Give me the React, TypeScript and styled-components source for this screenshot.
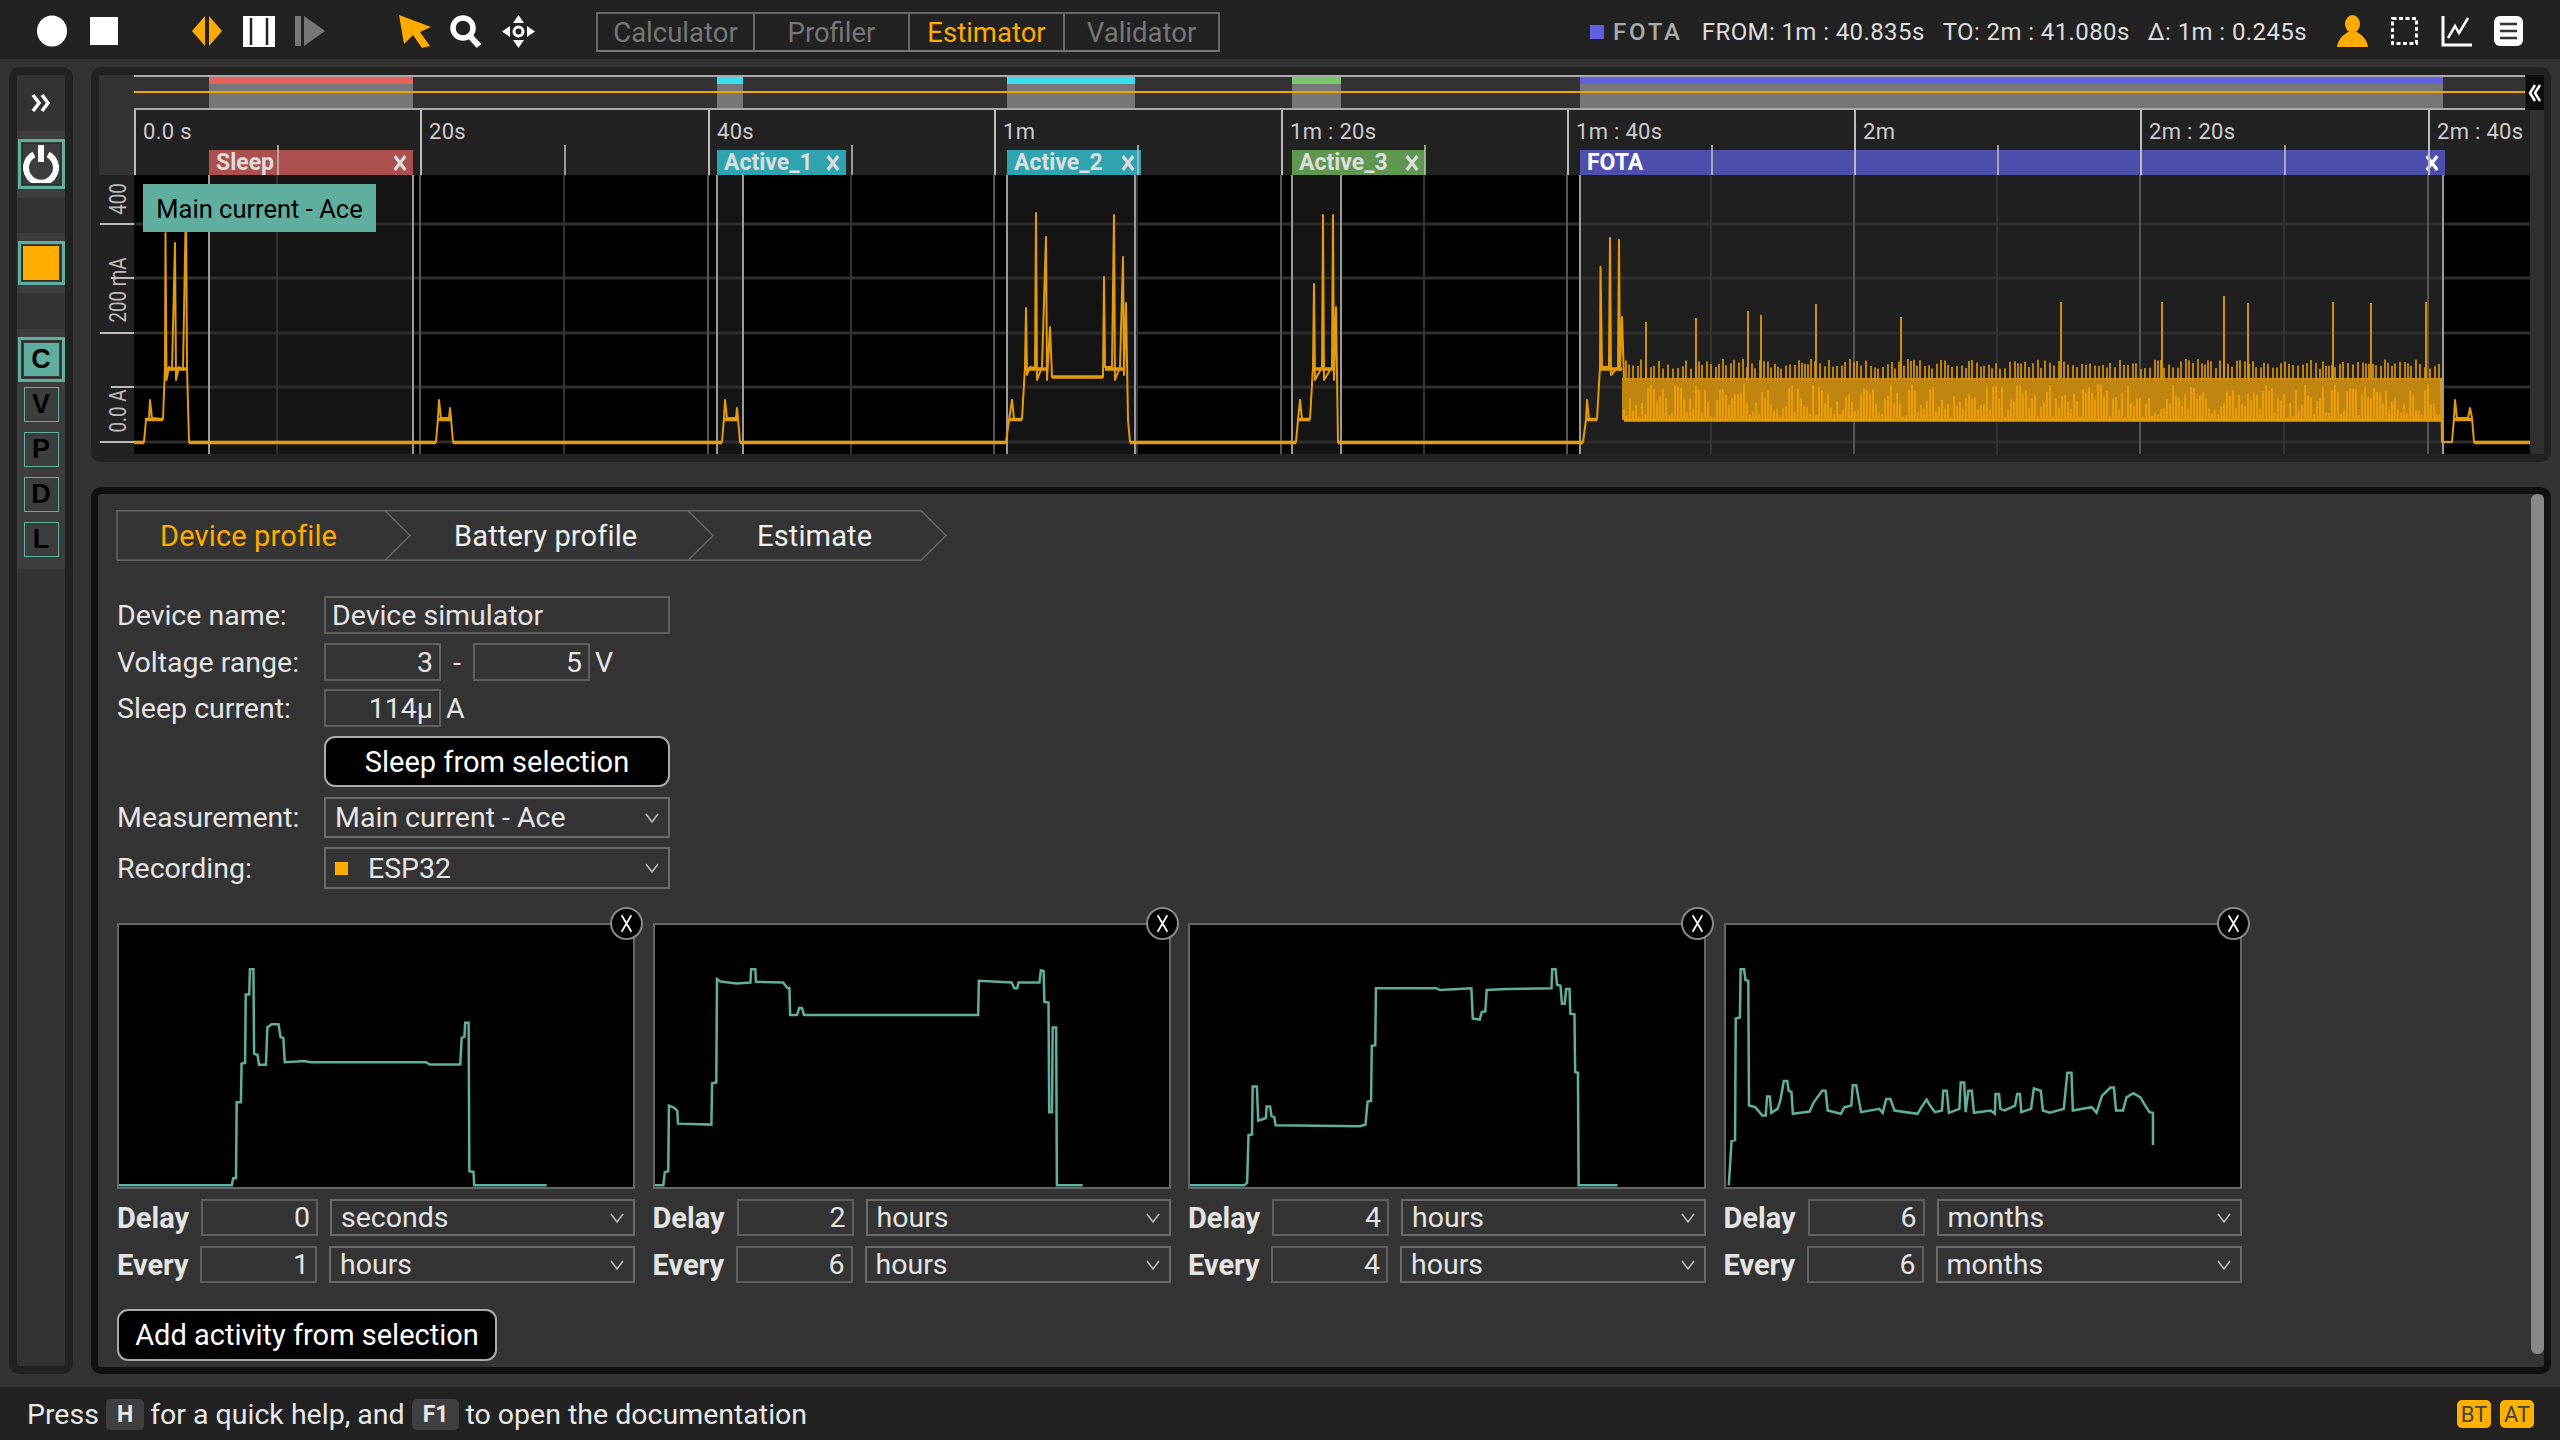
import styled, { createGlobalStyle } from 'styled-components';

const GlobalStyle = createGlobalStyle`
  html, body {
    margin: 0;
    padding: 0;
    background: #333;
    font-family: Roboto, "Liberation Sans", sans-serif;
  }
  * { box-sizing: border-box; }
`

const ORANGE = '#ffab00'
const TEAL = '#5fae9e'
const WAVE = '#e39b0c'

const Page = styled.div`
  width: 2560px;
  height: 1440px;
  display: flex;
  flex-direction: column;
  background: #333;
  overflow: hidden;
`

/* top bar */
const TopBar = styled.div`
  height: 59px;
  flex: none;
  background: #222;
  display: flex;
  align-items: center;
  position: relative;
  padding: 3px 0 0 37px;
`

const IconBox = styled.svg<{ $ml: number }>`
  display: block;
  flex: none;
  margin-left: ${p => p.$ml}px;
`

const Tabs = styled.div`
  display: flex;
  height: 40px;
  margin: 2px 0 0 61px;
  border: 2px solid #666;
  border-bottom-color: #777;
`

const Tab = styled.div<{ $active?: boolean }>`
  width: 155px;
  display: flex;
  align-items: center;
  justify-content: center;
  font-size: 27.5px;
  color: ${p => (p.$active ? ORANGE : '#777')};
  & + & { border-left: 2px solid #666; }
`

const Metrics = styled.div`
  display: flex;
  align-items: center;
  margin: 1px 0 0 auto;
  color: #ddd;
  font-size: 24px;
  letter-spacing: 0.4px;
  white-space: pre;
`

const Swatch = styled.span<{ $color: string; $size: number }>`
  display: inline-block;
  width: ${p => p.$size}px;
  height: ${p => p.$size}px;
  background: ${p => p.$color};
  flex: none;
`

const MetricName = styled.span`
  color: #aaa;
  font-weight: 500;
  letter-spacing: 2.8px;
  margin: 0 19px 0 9px;
`

const Metric = styled.span`
  margin-right: 18px;
`

const TopIcons = styled.div`
  display: flex;
  align-items: center;
  padding-right: 37px;
`

/* main area */
const Main = styled.div`
  flex: 1;
  display: flex;
  padding: 8px 9px 13px;
  gap: 18px;
  min-height: 0;
`

const Rail = styled.div`
  width: 64px;
  flex: none;
  border: 8px solid #222;
  border-radius: 10px;
  background: #333;
  display: flex;
  flex-direction: column;
`

const RailToggle = styled.div`
  height: 56px;
  flex: none;
  display: flex;
  align-items: center;
  justify-content: center;
`

const RailGroup = styled.div<{ $h: number; $mt: number }>`
  height: ${p => p.$h}px;
  margin-top: ${p => p.$mt}px;
  flex: none;
  background: #3d3d3d;
  display: flex;
  flex-direction: column;
  align-items: center;
  padding-top: 8px;
`

const RailButton = styled.div<{ $h: number }>`
  width: 47px;
  height: ${p => p.$h}px;
  flex: none;
  border: 3px solid ${TEAL};
  display: flex;
  align-items: center;
  justify-content: center;
  outline: 1px solid #2c2c2c;
  outline-offset: -5px;
`

const OrangeFill = styled.div`
  width: 36px;
  height: 34px;
  background: ${ORANGE};
`

const ActiveLetter = styled.div`
  width: 35px;
  height: 33px;
  background: ${TEAL};
  color: #000;
  font: 700 27px "Liberation Sans", sans-serif;
  display: flex;
  align-items: center;
  justify-content: center;
`

const LetterList = styled.div`
  margin-top: 5px;
  display: flex;
  flex-direction: column;
  gap: 10px;
`

const LetterButton = styled.div`
  width: 35px;
  height: 35px;
  border: 1.5px solid ${TEAL};
  color: #000;
  font: 700 27px "Liberation Sans", sans-serif;
  display: flex;
  align-items: center;
  justify-content: center;
`

const RightColumn = styled.div`
  flex: 1;
  min-width: 0;
  display: flex;
  flex-direction: column;
  gap: 25px;
`

/* chart */
const ChartCard = styled.div`
  height: 395px;
  flex: none;
  background: #222;
  border-radius: 10px;
  padding: 8px 7px 8px 8px;
  display: grid;
  grid-template-columns: 35px 2396px 1fr;
  grid-template-rows: 100px 279px;
  position: relative;
`

const AxisHead = styled.div`
  background: #333;
`

const ChartHead = styled.div`
  display: flex;
  flex-direction: column;
`

const RightGutter = styled.div`
  grid-column: 3;
  grid-row: 1 / span 2;
  background: #2f2f2f;
`

const Overview = styled.div`
  width: 2391px;
  height: 35px;
  flex: none;
  background: #333;
  border-top: 2px solid #aaa;
  border-bottom: 2px solid #aaa;
  position: relative;
`

const OverviewRegion = styled.div<{ $x: number; $w: number }>`
  position: absolute;
  left: ${p => p.$x}px;
  width: ${p => p.$w}px;
  top: 0;
  bottom: 0;
  background: #777;
`

const OverviewStripe = styled.div<{ $color: string }>`
  height: 7px;
  background: ${p => p.$color};
`

const OverviewLine = styled.div`
  position: absolute;
  left: 0;
  right: 0;
  top: 14px;
  height: 2px;
  background: #f0a400;
`

const CollapseButton = styled.div`
  position: absolute;
  top: 8px;
  right: 7px;
  width: 18px;
  height: 35px;
  background: #0c0c0c;
  display: flex;
  align-items: center;
  justify-content: center;
`

const Timeline = styled.div`
  flex: 1;
  position: relative;
  overflow: hidden;
`

const MajorTick = styled.div<{ $x: number }>`
  position: absolute;
  left: ${p => p.$x}px;
  top: 0;
  bottom: 0;
  width: 2px;
  background: #bbb;
  z-index: 2;
`

const MinorTick = styled.div<{ $x: number }>`
  position: absolute;
  left: ${p => p.$x}px;
  top: 35px;
  bottom: 0;
  width: 2px;
  background: #bbb;
  opacity: 0.8;
  z-index: 2;
`

const TimeLabel = styled.div<{ $x: number }>`
  position: absolute;
  left: ${p => p.$x + 9}px;
  top: 10px;
  font-size: 22px;
  line-height: 24px;
  letter-spacing: 0.3px;
  color: #ccc;
  white-space: pre;
`

const ActivityTag = styled.div<{ $x: number; $w: number; $color: string; $bright?: boolean }>`
  position: absolute;
  left: ${p => p.$x}px;
  width: ${p => p.$w}px;
  top: 40px;
  height: 25px;
  background: ${p => p.$color};
  color: ${p => (p.$bright ? '#fff' : '#ddd')};
  font-size: 23px;
  font-weight: 700;
  line-height: 25px;
  padding: 0 6px 0 7px;
  display: flex;
  justify-content: space-between;
  align-items: center;
`

const YAxis = styled.div`
  position: relative;
  background: #222;
`

const YTick = styled.div<{ $y: number; $x: number }>`
  position: absolute;
  top: ${p => p.$y - 1}px;
  left: ${p => p.$x}px;
  right: 0;
  height: 2px;
  background: #bbb;
`

const YLabel = styled.div<{ $y: number }>`
  position: absolute;
  left: 19px;
  top: ${p => p.$y}px;
  width: 0;
  height: 0;
  display: flex;
  align-items: center;
  justify-content: center;
  color: #bbb;
  font-size: 24px;
  white-space: pre;
  transform: rotate(-90deg) scaleX(0.78);
`

const Plot = styled.div`
  position: relative;
  background: #000;
`

const PlotSvg = styled.svg`
  display: block;
`

const SignalTag = styled.div`
  position: absolute;
  left: 9px;
  top: 9px;
  width: 233px;
  height: 48px;
  background: ${TEAL};
  color: #000;
  font-size: 25.5px;
  padding-top: 1px;
  display: flex;
  align-items: center;
  justify-content: center;
`

/* lower panel */
const Panel = styled.div`
  flex: 1;
  min-height: 0;
  background: #343434;
  border: 7px solid #111;
  border-radius: 10px;
  padding: 16px 0 0 19px;
  position: relative;
  color: #e4e4e4;
  font-size: 28.5px;
`

const ScrollThumb = styled.div`
  position: absolute;
  right: 0;
  top: 0;
  bottom: 13px;
  width: 13px;
  background: #888;
  border-radius: 6px;
`

const Steps = styled.div`
  display: flex;
  height: 51px;
`

const Step = styled.div<{ $w: number; $pad: number; $active?: boolean }>`
  width: ${p => p.$w}px;
  height: 51px;
  position: relative;
  padding-left: ${p => p.$pad}px;
  line-height: 52px;
  font-size: 29px;
  letter-spacing: 0.15px;
  color: ${p => (p.$active ? ORANGE : '#f0f0f0')};
`

const StepOutline = styled.svg`
  position: absolute;
  left: 0;
  top: 0;
  overflow: visible;
`

const Form = styled.div`
  margin-top: 35px;
  display: flex;
  flex-direction: column;
`

const FormRow = styled.div<{ $h: number; $mt: number }>`
  height: ${p => p.$h}px;
  margin-top: ${p => p.$mt}px;
  display: flex;
  align-items: center;
`

const Label = styled.div`
  width: 207px;
  flex: none;
`

const Input = styled.input<{ $w: number; $right?: boolean }>`
  width: ${p => p.$w}px;
  height: 100%;
  background: transparent;
  border: 2px solid #5f5f5f;
  color: #e4e4e4;
  font: 28.5px Roboto, sans-serif;
  padding: 0 6px;
  text-align: ${p => (p.$right ? 'right' : 'left')};
  outline: none;
`

const Unit = styled.span`
  margin-left: 5px;
`

const Dash = styled.span`
  width: 32px;
  text-align: center;
`

const BlackButton = styled.div<{ $w: number; $h: number }>`
  width: ${p => p.$w}px;
  height: ${p => p.$h}px;
  background: #000;
  border: 2px solid #aaa;
  border-radius: 11px;
  color: #fff;
  font-size: 29px;
  display: flex;
  align-items: center;
  justify-content: center;
`

const Select = styled.div<{ $w?: number; $ml?: number }>`
  ${p => (p.$w ? `width: ${p.$w}px;` : 'flex: 1;')}
  margin-left: ${p => p.$ml ?? 0}px;
  height: 100%;
  border: 2px solid #6a6a6a;
  display: flex;
  align-items: center;
  padding: 0 8px 0 9px;
  color: #e4e4e4;
  font-size: 28.5px;
`

const SelectText = styled.span`
  flex: 1;
  display: flex;
  align-items: center;
`

const RecordingDot = styled.span`
  width: 13px;
  height: 13px;
  background: ${ORANGE};
  margin: 0 20px 0 0;
`

const Cards = styled.div`
  margin-top: 34px;
  display: flex;
  gap: 17.5px;
`

const Card = styled.div`
  width: 518px;
  flex: none;
`

const Spark = styled.div`
  height: 266px;
  background: #000;
  border: 2px solid #666;
  position: relative;
`

const SparkSvg = styled.svg`
  display: block;
  width: 100%;
  height: 100%;
`

const CloseCircle = styled.div`
  position: absolute;
  top: -18px;
  right: -10px;
  width: 33px;
  height: 33px;
  border-radius: 50%;
  background: #000;
  border: 2px solid #888;
  color: #fff;
  display: flex;
  align-items: center;
  justify-content: center;
`

const CardRow = styled.div`
  height: 37px;
  margin-top: 10px;
  display: flex;
  align-items: center;
`

const CardLabel = styled.div<{ $w: number }>`
  width: ${p => p.$w}px;
  flex: none;
  font-weight: 700;
  font-size: 29px;
`

const AddRow = styled.div`
  margin-top: 26px;
`

/* status bar */
const StatusBar = styled.div`
  height: 53px;
  flex: none;
  background: #222;
  color: #e8e8e8;
  font-size: 28.5px;
  display: flex;
  align-items: center;
  padding: 1px 26px 0 27px;
  white-space: pre;
`

const Key = styled.span`
  display: inline-flex;
  align-items: center;
  justify-content: center;
  height: 31px;
  padding: 0 11px;
  margin: 0 6px 0 7px;
  background: #3f3f3f;
  border-radius: 5px;
  font-size: 23px;
  font-weight: 700;
`

const Badges = styled.div`
  margin-left: auto;
  display: flex;
  gap: 9px;
`

const Badge = styled.div`
  width: 34px;
  height: 28px;
  background: #ffb000;
  border-radius: 5px;
  color: #444;
  font-size: 22px;
  display: flex;
  align-items: center;
  justify-content: center;
`

/* data */
const CHART_X = 134
const MAJORS = [134, 420, 708, 994, 1281, 1567, 1854, 2140, 2428]
const MINORS = [277, 564, 851, 1137, 1424, 1711, 1997, 2284]
const TIME_LABELS = ['0.0 s', '20s', '40s', '1m', '1m : 20s', '1m : 40s', '2m', '2m : 20s', '2m : 40s']

const REGIONS = [
  { name: 'Sleep', from: 209, to: 413, tagTo: 413, stripe: '#e56060', tag: '#ab4f4f' },
  { name: 'Active_1', from: 717, to: 743, tagTo: 846, stripe: '#36e0f0', tag: '#2fa3b0' },
  { name: 'Active_2', from: 1007, to: 1135, tagTo: 1141, stripe: '#36e0f0', tag: '#2fa3b0' },
  { name: 'Active_3', from: 1292, to: 1341, tagTo: 1425, stripe: '#7bc86c', tag: '#5f9650' },
  { name: 'FOTA', from: 1580, to: 2443, tagTo: 2445, stripe: '#6262e0', tag: '#4e4fac' },
]

const GRID_Y = [224, 278, 333, 387, 442]

// small seeded generator so the fota band looks the same on every render
const makeRand = (seed: number) => () => {
  seed = (seed * 1664525 + 1013904223) % 4294967296
  return seed / 4294967296
}

const hump = (x: number) => [
  [x, 442], [x + 2, 420], [x + 5, 419], [x + 6, 400], [x + 8, 418], [x + 16, 419],
]

const MAIN_WAVE: number[][] = [
  [134, 442], [144, 442], ...hump(144).slice(1), [163, 419], [165, 367], [165.5, 233], [166.5, 380], [169, 367],
  [172, 370], [175, 243], [176, 380], [179, 367], [183, 370], [186, 200], [187, 367], [189, 442],
  [436, 442], [438, 418], [439, 400], [441, 418], [449, 418], [450, 408], [451, 418], [453, 442],
  [722, 442], [724, 418], [725, 400], [727, 418], [736, 418], [737, 408], [738, 418], [740, 442],
  [1006, 442], [1009, 420], [1012, 400], [1014, 419], [1022, 419], [1025, 367], [1026, 308], [1027, 375],
  [1030, 367], [1035, 368], [1036, 213], [1037, 380], [1042, 367], [1046, 237], [1047, 380], [1050, 327],
  [1052, 377], [1103, 377], [1104, 277], [1105, 367], [1112, 367], [1114, 215], [1115, 380], [1120, 367],
  [1123, 257], [1124, 375], [1126, 303], [1128, 420], [1130, 442],
  [1296, 442], [1298, 420], [1300, 400], [1302, 419], [1310, 419], [1313, 367], [1314, 284], [1315, 380],
  [1322, 367], [1323, 215], [1324, 380], [1332, 367], [1333, 215], [1334, 380], [1336, 307], [1338, 442],
  [1583, 442], [1586, 420], [1587, 400], [1589, 419], [1597, 419], [1600, 367], [1600.5, 267], [1602, 367],
  [1609, 367], [1610, 238], [1611, 375], [1618, 367], [1619, 240], [1620, 370], [1622, 317], [1624, 378],
]

const TAIL_WAVE = [
  [2441, 378], [2442, 442], [2452, 442], [2454, 418], [2455, 400], [2457, 418], [2468, 418], [2470, 408],
  [2472, 418], [2474, 442], [2530, 442],
]

const FOTA_SPIKES = [
  [1646, 322], [1696, 318], [1748, 311], [1761, 315], [1816, 304], [1901, 317], [2061, 302],
  [2162, 302], [2224, 296], [2248, 303], [2333, 302], [2371, 303], [2426, 302],
]

// thick stretches of the trace, [x1, x2, y]
const THICK_TRACE = [
  [134, 144, 442.5], [189, 436, 442.5], [453, 722, 442.5], [740, 1006, 442.5], [1130, 1296, 442.5],
  [1338, 1583, 442.5], [2474, 2530, 442.5], [1624, 2441, 420], [1052, 1103, 377],
  [165, 187, 369], [1025, 1047, 369], [1105, 1124, 369], [1313, 1335, 369], [1600, 1622, 369],
  [145, 163, 419.5], [438, 451, 419.5], [724, 738, 419.5], [1009, 1022, 419.5], [1298, 1310, 419.5],
  [1586, 1597, 419.5], [2454, 2472, 419.5],
]

const toPoints = (pts: number[][]) => pts.map(([x, y]) => `${x},${y}`).join(' ')

const buildBand = () => {
  const rand = makeRand(42)
  let lower = ''
  for (let x = 1624; x < 2441; x += 3) {
    lower += `M${x} 420V${(418 - rand() * 34).toFixed(1)}`
  }
  let upper = ''
  for (let x = 1626; x < 2441; x += 3 + Math.floor(rand() * 3)) {
    upper += `M${x} 380V${(369 - rand() * 10).toFixed(1)}`
  }
  return { lower, upper }
}

const BAND = buildBand()

const ACTIVITIES = [
  {
    box: '24 40 738 798', delay: '0', delayUnit: 'seconds', every: '1', everyUnit: 'hours',
    pts: [[24, 833], [186, 833], [188, 811], [192, 811], [193, 580], [199, 580], [200, 462], [205, 460], [206, 252], [211, 252], [212, 175], [217, 175], [218, 432], [223, 436], [225, 466], [235, 466], [237, 352], [243, 342], [253, 342], [256, 382], [260, 384], [262, 458], [280, 456], [290, 454], [300, 458], [465, 458], [470, 465], [514, 465], [516, 384], [520, 380], [521, 338], [526, 338], [527, 790], [533, 792], [534, 833], [638, 833]],
  },
  {
    box: '788 40 738 798', delay: '2', delayUnit: 'hours', every: '6', everyUnit: 'hours',
    pts: [[788, 833], [800, 833], [802, 793], [807, 790], [808, 590], [815, 596], [820, 605], [821, 645], [869, 648], [870, 522], [876, 520], [877, 205], [882, 212], [905, 218], [925, 215], [926, 175], [932, 175], [933, 213], [972, 215], [978, 232], [981, 232], [982, 314], [992, 314], [995, 293], [999, 293], [1002, 314], [1252, 314], [1253, 210], [1300, 215], [1304, 233], [1308, 233], [1310, 215], [1340, 215], [1342, 178], [1346, 180], [1347, 274], [1353, 276], [1354, 610], [1358, 610], [1359, 352], [1364, 352], [1365, 833], [1402, 833]],
  },
  {
    box: '26 40 738 798', delay: '4', delayUnit: 'hours', every: '4', everyUnit: 'hours',
    pts: [[26, 833], [104, 833], [108, 825], [110, 680], [115, 678], [116, 532], [122, 532], [124, 636], [135, 628], [136, 593], [141, 593], [143, 622], [147, 625], [149, 650], [270, 653], [278, 648], [281, 578], [286, 576], [287, 408], [292, 406], [293, 233], [380, 233], [385, 238], [405, 236], [430, 233], [432, 325], [442, 328], [445, 305], [450, 303], [452, 238], [480, 235], [545, 233], [546, 175], [551, 175], [553, 222], [558, 225], [560, 280], [564, 280], [566, 235], [571, 235], [572, 310], [578, 312], [579, 488], [583, 490], [584, 833], [640, 833]],
  },
  {
    box: '790 40 738 798', delay: '6', delayUnit: 'months', every: '6', everyUnit: 'months',
    pts: [[794, 833], [798, 698], [803, 695], [804, 325], [810, 322], [811, 175], [816, 175], [818, 208], [822, 210], [823, 590], [832, 595], [842, 620], [847, 620], [849, 562], [853, 562], [855, 612], [864, 600], [868, 575], [873, 515], [878, 515], [880, 545], [884, 548], [886, 615], [910, 608], [916, 580], [928, 545], [933, 545], [936, 605], [955, 615], [960, 595], [970, 590], [972, 528], [977, 528], [980, 565], [984, 610], [1010, 600], [1015, 612], [1020, 570], [1026, 570], [1032, 605], [1065, 615], [1072, 590], [1078, 572], [1083, 590], [1090, 610], [1100, 605], [1102, 545], [1107, 545], [1110, 612], [1125, 600], [1127, 520], [1132, 520], [1134, 610], [1138, 545], [1143, 545], [1146, 612], [1170, 605], [1176, 615], [1177, 555], [1182, 555], [1184, 600], [1190, 605], [1205, 590], [1208, 555], [1212, 555], [1214, 610], [1228, 600], [1232, 538], [1242, 545], [1245, 605], [1255, 612], [1275, 600], [1280, 490], [1286, 490], [1288, 605], [1315, 595], [1322, 612], [1330, 560], [1342, 535], [1347, 535], [1350, 605], [1360, 605], [1365, 565], [1375, 552], [1385, 565], [1392, 590], [1398, 610], [1403, 612], [1403, 710]],
  },
]

const ChevronDown = () => (
  <svg width="16" height="12" viewBox="0 0 16 12" fill="none" stroke="#bbb" strokeWidth="1.6">
    <path d="M2 2L8 10L14 2" />
  </svg>
)

const SmallX = ({ w, h, weight }: { w: number; h: number; weight: number }) => (
  <svg width={w} height={h} viewBox="0 0 16 16" preserveAspectRatio="none" fill="none" stroke="currentColor" strokeWidth={weight}>
    <path d="M2 1L14 15M14 1L2 15" />
  </svg>
)

const StepShape = ({ w, first }: { w: number; first?: boolean }) => (
  <StepOutline width={w + 26} height="51" viewBox={`0 0 ${w + 26} 51`} fill="none" stroke="#666" strokeWidth="1.5">
    <path d={`${first ? 'M0 50.25V.75' : 'M0 .75'}H${w}L${w + 25} 25.5L${w} 50.25H0`} />
  </StepOutline>
)

const PlotDrawing = () => (
  <PlotSvg width="2396" height="279" viewBox="134 175 2396 279">
    {REGIONS.map(r => (
      <rect key={r.name} x={r.from} y="175" width={r.to - r.from} height="279" fill={r.name === 'FOTA' ? '#1f1f1f' : '#141414'} />
    ))}
    {GRID_Y.map(y => (
      <line key={y} x1="134" x2="2530" y1={y} y2={y} stroke="#2e2e2e" strokeWidth="3" />
    ))}
    {MINORS.map(x => (
      <line key={x} x1={x} x2={x} y1="175" y2="454" stroke="#333" strokeWidth="2" />
    ))}
    {MAJORS.slice(1).map(x => (
      <line key={x} x1={x} x2={x} y1="175" y2="454" stroke="#555" strokeWidth="2" />
    ))}
    {REGIONS.map(r => (
      <g key={r.name} stroke="#9a9a9a" strokeWidth="2">
        <line x1={r.from} x2={r.from} y1="175" y2="454" />
        <line x1={r.to} x2={r.to} y1="175" y2="454" />
      </g>
    ))}
    <rect x="1622" y="378" width="819" height="42" fill="#c08410" />
    <path d={BAND.lower} stroke="#f5a300" strokeWidth="1.6" fill="none" />
    <path d={BAND.upper} stroke={WAVE} strokeWidth="1.6" fill="none" />
    {FOTA_SPIKES.map(([x, y]) => (
      <line key={x} x1={x} x2={x} y1="378" y2={y} stroke={WAVE} strokeWidth="1.8" />
    ))}
    <polyline points={toPoints(MAIN_WAVE)} fill="none" stroke={WAVE} strokeWidth="2" strokeLinejoin="round" />
    <polyline points={toPoints(TAIL_WAVE)} fill="none" stroke={WAVE} strokeWidth="2" strokeLinejoin="round" />
    <g stroke={WAVE} strokeWidth="3.5">
      {THICK_TRACE.map(([x1, x2, y]) => (
        <line key={`${x1}-${y}`} x1={x1} x2={x2} y1={y} y2={y} />
      ))}
    </g>
  </PlotSvg>
)

const App = () => {
  return (
    <Page>
      <GlobalStyle />
      <TopBar>
        <IconBox $ml={0} width="30" height="32" viewBox="0 0 30 32"><ellipse cx="15" cy="16" rx="15" ry="15.5" fill="#fff" /></IconBox>
        <IconBox $ml={23} width="28" height="28" viewBox="0 0 28 28"><rect width="28" height="28" fill="#fff" /></IconBox>
        <IconBox $ml={74} width="30" height="32" viewBox="0 0 30 32">
          <path d="M13 1V31L0 16ZM17 1V31L30 16Z" fill={ORANGE} />
        </IconBox>
        <IconBox $ml={21} width="32" height="31" viewBox="0 0 32 31">
          <path d="M0 0H32V31H0Z" fill="#fff" />
          <path d="M8 2V29M24 2V29" stroke="#222" strokeWidth="2.5" />
        </IconBox>
        <IconBox $ml={20} width="30" height="30" viewBox="0 0 30 30">
          <rect x="0" y="0" width="6" height="30" fill="#777" />
          <path d="M9 0L30 15L9 30Z" fill="#777" />
        </IconBox>
        <IconBox $ml={74} width="32" height="33" viewBox="0 0 32 33">
          <path d="M0 0L32 12L21 17L31 31L23 33L14 20L5 29Z" fill={ORANGE} />
        </IconBox>
        <IconBox $ml={19} width="32" height="33" viewBox="0 0 32 33" fill="none">
          <circle cx="13" cy="13" r="10" stroke="#fff" strokeWidth="5.5" />
          <path d="M19 20L29 31" stroke="#fff" strokeWidth="6" />
        </IconBox>
        <IconBox $ml={20} width="33" height="33" viewBox="0 0 33 33" fill="#fff">
          <path d="M16.5 0L22 8H11ZM16.5 33L11 25H22ZM0 16.5L8 11V22ZM33 16.5L25 22V11Z" />
          <circle cx="16.5" cy="16.5" r="4.5" fill="none" stroke="#fff" strokeWidth="3" />
        </IconBox>
        <Tabs>
          <Tab>Calculator</Tab>
          <Tab>Profiler</Tab>
          <Tab $active>Estimator</Tab>
          <Tab>Validator</Tab>
        </Tabs>
        <Metrics>
          <Swatch $color="#5f5fe0" $size={14} />
          <MetricName>FOTA</MetricName>
          <Metric>FROM: 1m : 40.835s</Metric>
          <Metric>TO: 2m : 41.080s</Metric>
          <Metric>Δ: 1m : 0.245s</Metric>
        </Metrics>
        <TopIcons>
          <IconBox $ml={12} width="31" height="32" viewBox="0 0 31 32">
            <ellipse cx="15.5" cy="9" rx="7.5" ry="9" fill={ORANGE} />
            <path d="M0 32C1 24 6 20 11 17H20C25 20 30 24 31 32Z" fill={ORANGE} />
          </IconBox>
          <IconBox $ml={23} width="27" height="28" viewBox="0 0 27 28" fill="none">
            <rect x="1.5" y="1.5" width="24" height="25" stroke="#fff" strokeWidth="3" strokeDasharray="4 2.5" />
          </IconBox>
          <IconBox $ml={23} width="31" height="31" viewBox="0 0 31 31" fill="none" stroke="#fff">
            <path d="M2 0V29H31" strokeWidth="3" />
            <path d="M7 22L14 10L18 17L27 2" strokeWidth="2.5" />
          </IconBox>
          <IconBox $ml={22} width="29" height="30" viewBox="0 0 29 30">
            <rect width="29" height="30" rx="6" fill="#fff" />
            <path d="M6 8H23M6 15H23M6 22H23" stroke="#333" strokeWidth="2.5" />
          </IconBox>
        </TopIcons>
      </TopBar>

      <Main>
        <Rail>
          <RailToggle>
            <svg width="22" height="20" viewBox="0 0 22 20" fill="none" stroke="#fff" strokeWidth="3.5">
              <path d="M3 2L9 10L3 18M12 2L18 10L12 18" />
            </svg>
          </RailToggle>
          <RailGroup $h={67} $mt={0}>
            <RailButton $h={50}>
              <svg width="36" height="38" viewBox="0 0 36 38" fill="none" stroke="#fff" strokeWidth="6">
                <path d="M11 9.5A15 15 0 1 0 25 9.5" />
                <path d="M18 0V17" />
              </svg>
            </RailButton>
          </RailGroup>
          <RailGroup $h={60} $mt={35}>
            <RailButton $h={44}><OrangeFill /></RailButton>
          </RailGroup>
          <RailGroup $h={240} $mt={36}>
            <RailButton $h={45}><ActiveLetter>C</ActiveLetter></RailButton>
            <LetterList>
              {['V', 'P', 'D', 'L'].map(l => <LetterButton key={l}>{l}</LetterButton>)}
            </LetterList>
          </RailGroup>
        </Rail>

        <RightColumn>
          <ChartCard>
            <AxisHead />
            <ChartHead>
              <Overview>
                {REGIONS.map(r => (
                  <OverviewRegion key={r.name} $x={r.from - CHART_X} $w={r.to - r.from}>
                    <OverviewStripe $color={r.stripe} />
                  </OverviewRegion>
                ))}
                <OverviewLine />
              </Overview>
              <Timeline>
                {REGIONS.map(r => (
                  <ActivityTag key={r.name} $x={r.from - CHART_X} $w={r.tagTo - r.from} $color={r.tag} $bright={r.name === 'FOTA'}>
                    <span>{r.name}</span>
                    <SmallX w={14} h={16} weight={3.5} />
                  </ActivityTag>
                ))}
                {MAJORS.map((x, i) => (
                  <div key={x}>
                    <MajorTick $x={x - CHART_X} />
                    <TimeLabel $x={x - CHART_X}>{TIME_LABELS[i]}</TimeLabel>
                  </div>
                ))}
                {MINORS.map(x => <MinorTick key={x} $x={x - CHART_X} />)}
              </Timeline>
            </ChartHead>
            <RightGutter />
            <YAxis>
              {[224, 333, 442].map(y => <YTick key={y} $y={y - 175} $x={1} />)}
              {[278, 387].map(y => <YTick key={y} $y={y - 175} $x={12} />)}
              <YLabel $y={24}>400</YLabel>
              <YLabel $y={115}>200 mA</YLabel>
              <YLabel $y={236}>0.0 A</YLabel>
            </YAxis>
            <Plot>
              <PlotDrawing />
              <SignalTag>Main current - Ace</SignalTag>
            </Plot>
            <CollapseButton>
              <svg width="14" height="18" viewBox="0 0 14 18" fill="none" stroke="#fff" strokeWidth="2.5">
                <path d="M7 1L2 9L7 17M12 1L7 9L12 17" />
              </svg>
            </CollapseButton>
          </ChartCard>

          <Panel>
            <ScrollThumb />
            <Steps>
              <Step $w={268} $pad={43} $active>Device profile<StepShape w={268} first /></Step>
              <Step $w={303} $pad={69}>Battery profile<StepShape w={303} /></Step>
              <Step $w={233} $pad={69}>Estimate<StepShape w={233} /></Step>
            </Steps>
            <Form>
              <FormRow $h={38} $mt={0}>
                <Label>Device name:</Label>
                <Input $w={346} readOnly value="Device simulator" />
              </FormRow>
              <FormRow $h={38} $mt={9}>
                <Label>Voltage range:</Label>
                <Input $w={117} $right readOnly value="3" />
                <Dash>-</Dash>
                <Input $w={117} $right readOnly value="5" />
                <Unit>V</Unit>
              </FormRow>
              <FormRow $h={38} $mt={8}>
                <Label>Sleep current:</Label>
                <Input $w={117} $right readOnly value="114µ" />
                <Unit>A</Unit>
              </FormRow>
              <FormRow $h={51} $mt={9}>
                <Label />
                <BlackButton $w={346} $h={51}>Sleep from selection</BlackButton>
              </FormRow>
              <FormRow $h={41} $mt={10}>
                <Label>Measurement:</Label>
                <Select $w={346}>
                  <SelectText>Main current - Ace</SelectText>
                  <ChevronDown />
                </Select>
              </FormRow>
              <FormRow $h={42} $mt={9}>
                <Label>Recording:</Label>
                <Select $w={346}>
                  <SelectText><RecordingDot />ESP32</SelectText>
                  <ChevronDown />
                </Select>
              </FormRow>
            </Form>

            <Cards>
              {ACTIVITIES.map(a => (
                <Card key={a.box}>
                  <Spark>
                    <SparkSvg viewBox={a.box} preserveAspectRatio="none">
                      <polyline points={toPoints(a.pts)} fill="none" stroke={TEAL} strokeWidth="2.5" vectorEffect="non-scaling-stroke" />
                    </SparkSvg>
                    <CloseCircle><SmallX w={13} h={19} weight={2} /></CloseCircle>
                  </Spark>
                  <CardRow>
                    <CardLabel $w={84}>Delay</CardLabel>
                    <Input $w={117} $right readOnly value={a.delay} />
                    <Select $ml={12}>
                      <SelectText>{a.delayUnit}</SelectText>
                      <ChevronDown />
                    </Select>
                  </CardRow>
                  <CardRow>
                    <CardLabel $w={83}>Every</CardLabel>
                    <Input $w={117} $right readOnly value={a.every} />
                    <Select $ml={12}>
                      <SelectText>{a.everyUnit}</SelectText>
                      <ChevronDown />
                    </Select>
                  </CardRow>
                </Card>
              ))}
            </Cards>
            <AddRow>
              <BlackButton $w={380} $h={52}>Add activity from selection</BlackButton>
            </AddRow>
          </Panel>
        </RightColumn>
      </Main>

      <StatusBar>
        Press<Key>H</Key>for a quick help, and<Key>F1</Key>to open the documentation
        <Badges>
          <Badge>BT</Badge>
          <Badge>AT</Badge>
        </Badges>
      </StatusBar>
    </Page>
  );
}

export default App;
